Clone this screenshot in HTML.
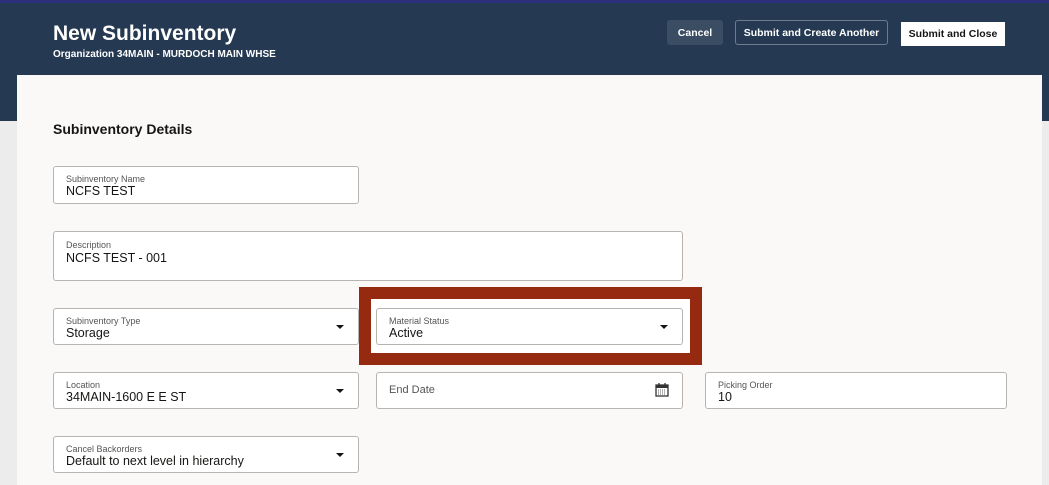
<!DOCTYPE html>
<html><head><style>
body{margin:0;width:1049px;height:480px;overflow:hidden;background:#ececec;font-family:"Liberation Sans",sans-serif;position:relative}
.hdr{position:absolute;left:0;top:0;width:1049px;height:121px;background:#253952;border-top:3px solid #2b2f7c;box-sizing:border-box}
.card{position:absolute;left:17px;top:75px;width:1025px;height:410px;background:#faf9f8}
.t{position:absolute;color:#fff}
.btn{position:absolute;top:20px;height:25px;box-sizing:border-box;border-radius:3px;font-size:10.5px;font-weight:bold;display:flex;align-items:center;justify-content:center}
.f{position:absolute;background:#fff;border:1px solid #b8b4b0;border-radius:3px;box-sizing:border-box}
.f .l{position:absolute;left:12px;top:7px;font-size:9px;color:#555}
.f .v{position:absolute;left:12px;top:17px;font-size:12.5px;color:#161513}
.ar{position:absolute;right:14px;top:16px;width:0;height:0;border-left:4px solid transparent;border-right:4px solid transparent;border-top:4px solid #161513}
</style></head><body>
<div class="hdr"></div>
<div class="t" style="left:53px;top:22px;font-size:21px;font-weight:bold">New Subinventory</div>
<div class="t" style="left:53px;top:49px;font-size:10px;font-weight:bold">Organization 34MAIN - MURDOCH MAIN WHSE</div>
<div class="btn" style="left:667px;width:56px;background:#3a4d63;color:#fff">Cancel</div>
<div class="btn" style="left:735px;width:153px;border:1px solid #6c7c8e;color:#fff">Submit and Create Another</div>
<div class="btn" style="left:901px;width:104px;top:22px;height:24px;background:#fff;color:#161513;border-radius:0">Submit and Close</div>
<div class="card"></div>
<div style="position:absolute;left:53px;top:121px;font-size:14px;font-weight:bold;color:#161513">Subinventory Details</div>
<div class="f" style="left:53px;top:166px;width:306px;height:38px"><div class="l">Subinventory Name</div><div class="v">NCFS TEST</div></div>
<div class="f" style="left:53px;top:231px;width:630px;height:50px"><div class="l" style="top:8px">Description</div><div class="v" style="top:19px">NCFS TEST - 001</div></div>
<div class="f" style="left:53px;top:308px;width:306px;height:37px"><div class="l">Subinventory Type</div><div class="v">Storage</div><div class="ar"></div></div>
<div style="position:absolute;left:359px;top:287px;width:343px;height:78px;box-sizing:border-box;border:12px solid #952a10;background:#fff"></div>
<div class="f" style="left:376px;top:308px;width:307px;height:37px"><div class="l">Material Status</div><div class="v">Active</div><div class="ar"></div></div>
<div class="f" style="left:53px;top:372px;width:306px;height:37px"><div class="l">Location</div><div class="v">34MAIN-1600 E E ST</div><div class="ar"></div></div>
<div class="f" style="left:376px;top:372px;width:307px;height:37px"><div class="v" style="top:11px;font-size:11px;color:#555">End Date</div>
<svg style="position:absolute;right:13px;top:10px" width="14" height="14" viewBox="0 0 14 14"><rect x="1" y="2" width="12" height="11" fill="none" stroke="#333" stroke-width="1.3"/><rect x="1" y="2" width="12" height="3" fill="#333"/><path d="M4 0v3M10 0v3" stroke="#333" stroke-width="1.3"/><path d="M3 7h8M3 9h8M3 11h8" stroke="#666" stroke-width="1" stroke-dasharray="1 1"/></svg></div>
<div class="f" style="left:705px;top:372px;width:302px;height:37px"><div class="l">Picking Order</div><div class="v">10</div></div>
<div class="f" style="left:53px;top:436px;width:306px;height:37px"><div class="l">Cancel Backorders</div><div class="v">Default to next level in hierarchy</div><div class="ar"></div></div>
</body></html>
